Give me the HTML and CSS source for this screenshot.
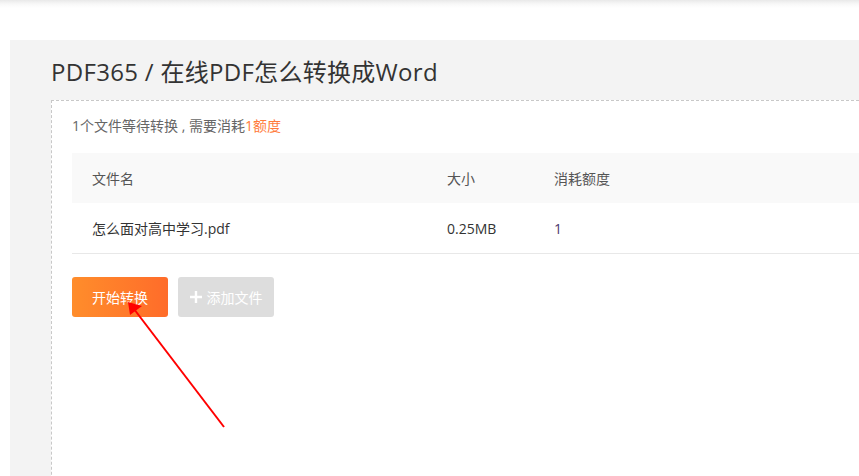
FILE: index.html
```html
<!DOCTYPE html>
<html lang="zh-CN">
<head>
<meta charset="utf-8">
<title>PDF365</title>
<link rel="stylesheet" href="styles.css">
</head>
<body>
<div class="topbar"></div>
<main class="main">
  <h1 class="title">PDF365 / 在线PDF怎么转换成Word</h1>
  <section class="card">
    <p class="summary">1个文件等待转换 , 需要消耗<span class="hl">1额度</span></p>
    <div class="table">
      <div class="row head">
        <div class="cell">文件名</div>
        <div class="cell">大小</div>
        <div class="cell">消耗额度</div>
      </div>
      <div class="row body">
        <div class="cell">怎么面对高中学习.pdf</div>
        <div class="cell">0.25MB</div>
        <div class="cell credit">1</div>
      </div>
    </div>
    <div class="actions">
      <button class="btn btn-start">开始转换</button>
      <button class="btn btn-add"><svg class="plus" width="12" height="12" viewBox="0 0 12 12"><path d="M6 0V12M0 6H12" stroke="#fff" stroke-width="2.4"/></svg>添加文件</button>
    </div>
  </section>
</main>
<svg class="arrow" width="859" height="476" viewBox="0 0 859 476">
  <line x1="224" y1="427" x2="134" y2="309" stroke="#f00" stroke-width="2"/>
  <polygon points="128,302 130,315 142,306" fill="#f00"/>
</svg>
</body>
</html>
```
FILE: styles.css
```css
html, body {
  margin: 0;
  padding: 0;
  height: 100%;
  overflow: hidden;
  background: #fff;
  font-family: "Open Sans", "Noto Sans CJK SC", sans-serif;
}
.topbar {
  height: 40px;
  background: linear-gradient(to bottom, #e9e9e9 0, #f8f8f8 4px, #fff 8px);
}
.main {
  margin-left: 10px;
  background: #f3f3f3;
  padding: 16px 0 0 41px;
  height: calc(100vh - 40px);
  box-sizing: border-box;
  overflow: hidden;
}
.title {
  margin: 0 0 12px;
  font-size: 24px;
  line-height: 32px;
  font-weight: 400;
  color: #333;
  letter-spacing: 0.3px;
  white-space: nowrap;
}
.card {
  background: #fff;
  border: 1px dashed #c8c8c8;
  border-right: none;
  border-bottom: none;
  padding: 15px 0 0 20px;
  height: 420px;
  box-sizing: border-box;
}
.summary {
  margin: 0;
  font-size: 14px;
  line-height: 20px;
  color: #666;
  white-space: nowrap;
}
.hl { color: #ff7a3a; }
.table {
  margin-top: 17px;
  font-size: 14px;
}
.row {
  display: grid;
  grid-template-columns: 355px 107px 1fr;
  height: 50px;
  align-items: center;
}
.row.head {
  background: #f9f9f9;
  color: #555;
}
.row.body {
  color: #333;
  border-bottom: 1px solid #e8e8e8;
}
.cell { padding-left: 20px; white-space: nowrap; }
.credit { color: #4b3a6e; }
.actions {
  display: flex;
  gap: 10px;
  margin-top: 23px;
}
.btn {
  width: 96px;
  height: 40px;
  border: none;
  border-radius: 3px;
  color: #fff;
  font-family: inherit;
  font-size: 14px;
  display: flex;
  align-items: center;
  justify-content: center;
  padding: 0;
}
.btn-start {
  background: linear-gradient(to right, #ff8d2b, #ff6c2a);
}
.btn-add {
  background: #dddddd;
}
.plus {
  margin-right: 5px;
}
.arrow {
  position: absolute;
  left: 0;
  top: 0;
  pointer-events: none;
}
```
